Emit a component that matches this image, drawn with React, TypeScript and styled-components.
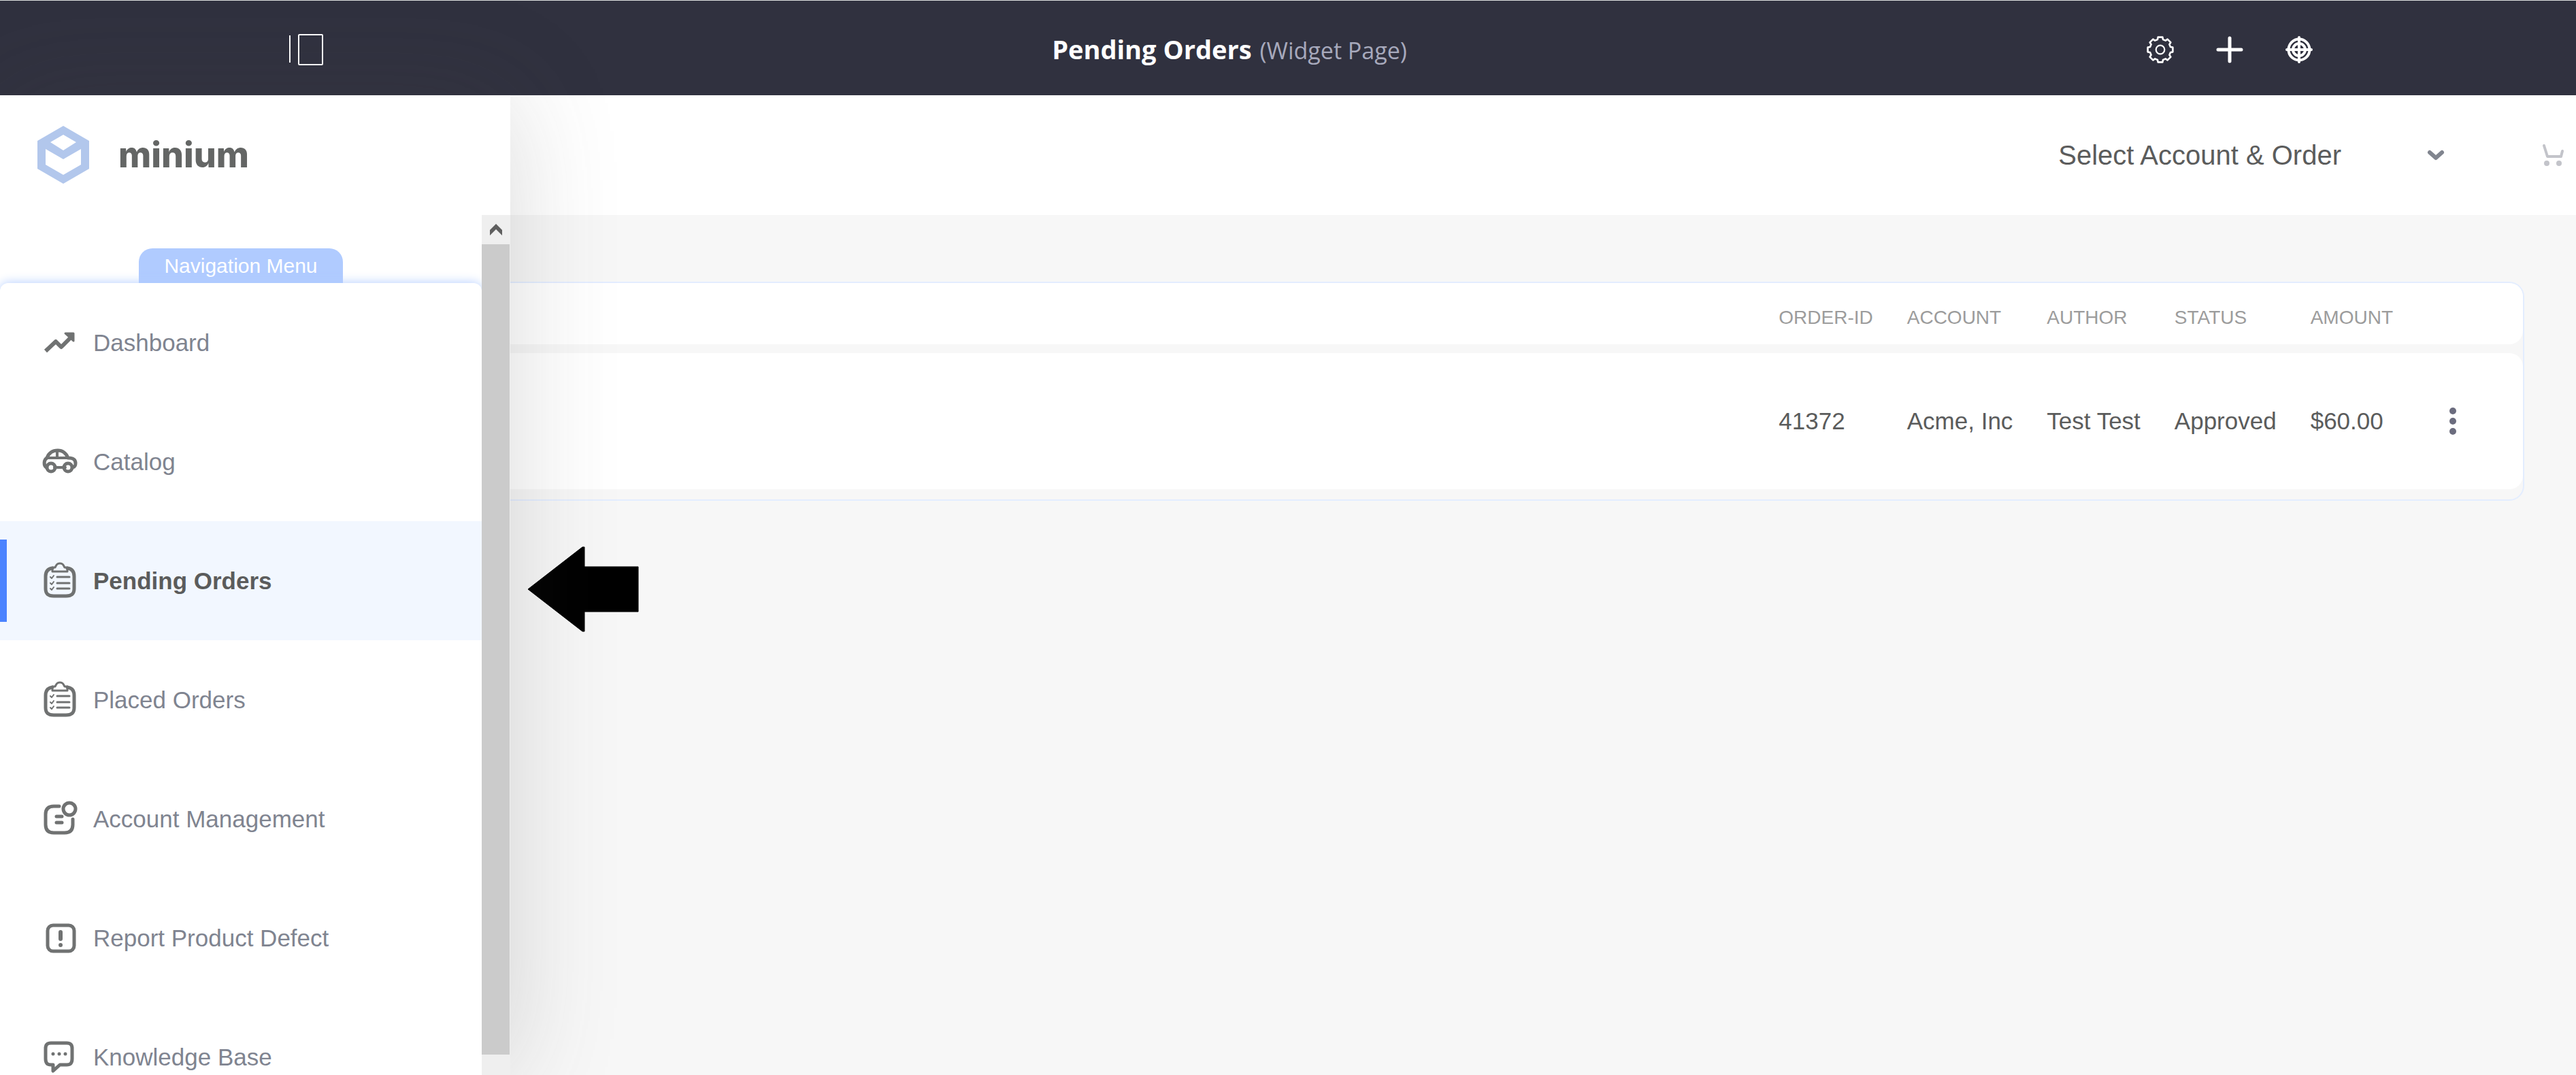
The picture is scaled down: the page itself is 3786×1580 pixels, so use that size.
import React from "react";
import styled, { createGlobalStyle } from "styled-components";

const GlobalStyle = createGlobalStyle`
  *, *::before, *::after { box-sizing: border-box; }
  body {
    margin: 0;
    background: #f7f7f7;
    color: #5b5c5c;
    font-family: "Liberation Sans", Arial, sans-serif;
    font-size: 35px;
  }
  button {
    font: inherit;
    color: inherit;
    background: none;
    border: 0;
    padding: 0;
    cursor: pointer;
  }
`;

const Shell = styled.div`
  display: flex;
  flex-direction: column;
  height: 100vh;
  overflow: hidden;
`;

const TopBar = styled.header`
  display: flex;
  align-items: center;
  justify-content: space-between;
  flex: none;
  height: 140px;
  padding: 4px 387px 0 424px;
  background: #30313f;
  border-top: 1px solid #dfe2e2;
  color: #fff;
`;

const IconButton = styled.button`
  display: flex;
  align-items: center;
  justify-content: center;
`;

const PageTitle = styled.h1`
  display: flex;
  align-items: baseline;
  gap: 12px;
  margin: 0;
  font-family: "Open Sans", "Noto Sans", sans-serif;
  font-size: 38px;
  font-weight: 700;
  line-height: 56px;
`;

const PageType = styled.span`
  color: #a7a9bc;
  font-size: 34px;
  font-weight: 400;
`;

const Tools = styled.div`
  display: flex;
  gap: 62px;
  padding-left: 16px;
`;

const Body = styled.div`
  display: grid;
  grid-template-columns: 750px minmax(0, 1fr);
  flex: 1;
  min-height: 0;
`;

const Sidebar = styled.aside`
  position: relative;
  z-index: 1;
  display: flex;
  flex-direction: column;
  min-height: 0;
  background: #fff;
  box-shadow: 0 0 150px rgba(68, 68, 72, 0.2);
`;

const Brand = styled.a`
  display: flex;
  align-items: center;
  flex: none;
  gap: 42px;
  height: 176px;
  padding: 0 0 1px 55px;
  color: #646665;
  font-family: Inter, sans-serif;
  font-size: 52px;
  font-weight: 800;
  line-height: 64px;
  text-decoration: none;
`;

const SidebarScroll = styled.div`
  display: flex;
  flex: 1;
  min-height: 0;
`;

const NavArea = styled.nav`
  display: flex;
  flex-direction: column;
  align-items: center;
  flex: 1;
  min-width: 0;
  overflow: hidden;
  padding-top: 49px;
`;

const NavLabel = styled.div`
  flex: none;
  padding: 0 37px;
  border-radius: 20px 20px 0 0;
  background: #b0cbff;
  color: #fff;
  font-size: 30px;
  line-height: 51px;
`;

const NavList = styled.ul`
  flex: none;
  width: 100%;
  margin: 0;
  padding: 0;
  list-style: none;
  background: #fff;
  border-radius: 12px;
  box-shadow: 0 0 16px #b0cbff;
`;

const NavLink = styled.a<{ $active?: boolean }>`
  position: relative;
  display: flex;
  align-items: center;
  gap: 21px;
  height: 175px;
  padding: 1px 0 0 60px;
  background: ${(p) => (p.$active ? "#f2f7ff" : "transparent")};
  color: ${(p) => (p.$active ? "#5b5c5c" : "#7f8490")};
  font-weight: ${(p) => (p.$active ? 700 : 400)};
  text-decoration: none;

  &::before {
    content: "";
    display: ${(p) => (p.$active ? "block" : "none")};
    position: absolute;
    left: 0;
    top: 27px;
    bottom: 27px;
    width: 10px;
    background: #4b83ff;
  }
`;

const ScrollTrack = styled.div`
  display: flex;
  flex-direction: column;
  flex: none;
  width: 42px;
  padding: 0 1px 30px 0;
  background: #efefef;
`;

const ScrollUp = styled(IconButton)`
  height: 43px;
  color: #5f5f5f;
`;

const ScrollThumb = styled.div`
  flex: 1;
  background: #cbcbcb;
`;

const Main = styled.main`
  position: relative;
  display: flex;
  flex-direction: column;
`;

const AccountBar = styled.div`
  display: flex;
  align-items: center;
  justify-content: flex-end;
  gap: 138px;
  height: 176px;
  padding-right: 14px;
  background: #fff;
`;

const AccountButton = styled.button`
  display: flex;
  align-items: center;
  gap: 125px;
  font-size: 40px;
  line-height: 48px;
`;

const CartButton = styled(IconButton)`
  width: 40px;
  color: #c3c4ca;
`;

const OrdersCard = styled.section`
  margin: 98px 76px 0 0;
  padding-bottom: 2px;
  border: 2px solid #e3edff;
  border-left: 0;
  border-radius: 0 22px 22px 0;
`;

const OrdersTable = styled.table`
  width: 100%;
  margin-top: -13px;
  border-collapse: separate;
  border-spacing: 0 13px;
  white-space: nowrap;
  text-align: left;
`;

const HeadCell = styled.th`
  height: 90px;
  padding: 12px 25px 0;
  background: #fff;
  color: #9c9c9c;
  font-size: 28px;
  font-weight: 400;
  &:last-child { border-radius: 0 20px 20px 0; }
`;

const Cell = styled.td`
  height: 200px;
  padding: 0 25px;
  background: #fff;
  &:last-child { border-radius: 0 20px 20px 0; }
`;

const FillColumn = styled.col`
  width: 100%;
`;

const MenuButton = styled(IconButton)`
  width: 40px;
  height: 60px;
  margin: 0 58px 0 18px;
  color: #6b6c7e;
`;

const Pointer = styled.svg`
  position: absolute;
  left: 25px;
  top: 663px;
`;

const NavIcon = styled.svg`
  flex: none;
  width: 56px;
  height: 56px;
  fill: none;
  stroke: #707272;
  stroke-width: 5;
  stroke-linecap: round;
  stroke-linejoin: round;
`;

const TrendIcon = () => (
  <NavIcon viewBox="0 0 56 56" aria-hidden="true">
    <path d="M7 40 L22 26 L30 34 L44 20" strokeLinecap="butt" strokeWidth="6" />
    <path d="M36 14 H48 V25 Z" fill="#707272" strokeWidth="3" />
  </NavIcon>
);

const CarIcon = () => (
  <NavIcon viewBox="0 0 56 56" aria-hidden="true">
    <g strokeWidth="5">
      <path d="M8 36 C4 33 4 25 9 22 C12 14 18 11 25 11 C32 11 37 15 40 22 C47 22 51 24 51 30 C51 34 50 35 47 36" />
      <path d="M9 22 H42 M24 11 V22 M20 36 H36" strokeWidth="4" />
      <circle cx="15" cy="36" r="6" />
      <circle cx="40" cy="36" r="6" />
    </g>
  </NavIcon>
);

const ClipboardIcon = () => (
  <NavIcon viewBox="0 0 56 56" aria-hidden="true">
    <path d="M17 9 C10 10 7 14 7 21 V39 C7 47 11 50 19 50 H37 C45 50 49 47 49 39 V21 C49 14 46 10 39 9" />
    <path d="M17 14 V8 H21 C23 4 24 2 28 2 C32 2 33 4 35 8 H39 V14 Z" strokeWidth="3" />
    <path d="M24 22 H42 M24 31 H42 M24 39 H42" strokeWidth="3" />
    <path d="M14 22 L16 24 L19 20 M14 31 L16 33 L19 29 M14 39 L16 41 L19 37" strokeWidth="2" />
  </NavIcon>
);

const AccountIcon = () => (
  <NavIcon viewBox="0 0 56 56" aria-hidden="true">
    <path d="M27 9 H19 C11 9 7 13 7 21 V36 C7 44 11 48 19 48 H35 C43 48 47 44 47 36 V28" />
    <circle cx="42" cy="13" r="9" />
    <path d="M23 24 H31 M23 33 H31" />
  </NavIcon>
);

const AlertIcon = () => (
  <NavIcon viewBox="0 0 56 56" aria-hidden="true">
    <rect x="10" y="9" width="39" height="38" rx="8" />
    <path d="M29 19 V29 M29 38 V38" strokeWidth="6" />
  </NavIcon>
);

const ChatIcon = () => (
  <NavIcon viewBox="0 0 56 56" aria-hidden="true">
    <path d="M15 7 H38 C44 7 46 10 46 15 V30 C46 36 44 39 38 39 H28 L18 48 V39 H15 C9 39 7 36 7 30 V15 C7 10 9 7 15 7 Z" />
    <path d="M18 23 H18 M27 23 H27 M36 23 H36" />
  </NavIcon>
);

const navItems = [
  { label: "Dashboard", Icon: TrendIcon },
  { label: "Catalog", Icon: CarIcon },
  { label: "Pending Orders", Icon: ClipboardIcon, active: true },
  { label: "Placed Orders", Icon: ClipboardIcon },
  { label: "Account Management", Icon: AccountIcon },
  { label: "Report Product Defect", Icon: AlertIcon },
  { label: "Knowledge Base", Icon: ChatIcon },
];

const columns = ["Order-ID", "Account", "Author", "Status", "Amount"];

const orders = [
  { id: "41372", account: "Acme, Inc", author: "Test Test", status: "Approved", amount: "$60.00" },
];

const gearPath = (() => {
  const points: string[] = [];
  for (let i = 0; i < 8; i++) {
    const mid = (i * Math.PI) / 4;
    [[-0.26, 15.5], [-0.18, 18.7], [0.18, 18.7], [0.26, 15.5]].forEach(([offset, radius]) => {
      const x = 20 + radius * Math.sin(mid + offset);
      const y = 20 - radius * Math.cos(mid + offset);
      points.push(`${x.toFixed(2)} ${y.toFixed(2)}`);
    });
  }
  return `M${points.join(" L")} Z`;
})();

export default function App() {
  return (
    <Shell>
      <GlobalStyle />
      <TopBar>
        <IconButton aria-label="Toggle panel">
          <svg width="51" height="46" viewBox="0 0 51 46" fill="none" stroke="#fff" strokeWidth="2">
            <path d="M2 2 V42" />
            <rect x="15" y="1" width="35" height="44" rx="1" />
          </svg>
        </IconButton>
        <PageTitle>
          Pending Orders <PageType>(Widget Page)</PageType>
        </PageTitle>
        <Tools>
          <IconButton aria-label="Configure page">
            <svg width="40" height="40" viewBox="0 0 40 40" fill="none" stroke="#fff" strokeWidth="2.6" strokeLinejoin="round">
              <path d={gearPath} />
              <circle cx="20" cy="20" r="6.3" strokeWidth="2.2" />
            </svg>
          </IconButton>
          <IconButton aria-label="Add">
            <svg width="40" height="40" viewBox="0 0 40 40" stroke="#fff" strokeWidth="5" strokeLinecap="round">
              <path d="M20 3 V37 M3 20 H37" />
            </svg>
          </IconButton>
          <IconButton aria-label="Experience">
            <svg width="40" height="40" viewBox="0 0 40 40" fill="none" stroke="#fff" strokeWidth="4" strokeLinecap="round">
              <circle cx="20" cy="20" r="15.5" />
              <circle cx="20" cy="20" r="9" />
              <path d="M20 2 V38 M2 20 H38" />
            </svg>
          </IconButton>
        </Tools>
      </TopBar>
      <Body>
        <Sidebar>
          <Brand href="#">
            <svg width="77" height="86" viewBox="0 0 77 86" aria-hidden="true">
              <path
                fill="#b2c7ec"
                fillRule="evenodd"
                d="M38 0 L76 22 V63 L38 85 L0 63 V22 Z M38 13 L19 24 L38 36 L57 24 Z M12 34 V57 L38 72 L64 57 V34 L38 49 Z"
              />
            </svg>
            minium
          </Brand>
          <SidebarScroll>
            <NavArea>
              <NavLabel>Navigation Menu</NavLabel>
              <NavList>
                {navItems.map(({ label, Icon, active }) => (
                  <li key={label}>
                    <NavLink href="#" $active={active} aria-current={active ? "page" : undefined}>
                      <Icon />
                      {label}
                    </NavLink>
                  </li>
                ))}
              </NavList>
            </NavArea>
            <ScrollTrack>
              <ScrollUp aria-label="Scroll up">
                <svg width="20" height="18" viewBox="0 0 20 18" fill="currentColor">
                  <path d="M10 0 L19 9 V17 L10 8 L1 17 V9 Z" />
                </svg>
              </ScrollUp>
              <ScrollThumb />
            </ScrollTrack>
          </SidebarScroll>
        </Sidebar>
        <Main>
          <AccountBar>
            <AccountButton>
              Select Account &amp; Order
              <svg width="28" height="20" viewBox="0 0 28 20" fill="none" stroke="#81858f" strokeWidth="6" strokeLinecap="round" strokeLinejoin="round">
                <path d="M5 6 L14 14 L23 6" />
              </svg>
            </AccountButton>
            <CartButton aria-label="Cart">
              <svg width="34" height="34" viewBox="0 0 34 34" fill="none" stroke="currentColor" strokeWidth="4" strokeLinecap="round" strokeLinejoin="round">
                <path d="M4 3 L9 19 H29 L31 11" />
                <circle cx="8" cy="29" r="4" fill="currentColor" stroke="none" />
                <circle cx="26" cy="29" r="4" fill="currentColor" stroke="none" />
              </svg>
            </CartButton>
          </AccountBar>
          <OrdersCard>
            <OrdersTable>
              <colgroup>
                <FillColumn />
              </colgroup>
              <thead>
                <tr>
                  <HeadCell aria-hidden="true" />
                  {columns.map((name) => (
                    <HeadCell key={name} scope="col">
                      {name.toUpperCase()}
                    </HeadCell>
                  ))}
                  <HeadCell aria-hidden="true" />
                </tr>
              </thead>
              <tbody>
                {orders.map((order) => (
                  <tr key={order.id}>
                    <Cell />
                    <Cell>{order.id}</Cell>
                    <Cell>{order.account}</Cell>
                    <Cell>{order.author}</Cell>
                    <Cell>{order.status}</Cell>
                    <Cell>{order.amount}</Cell>
                    <Cell>
                      <MenuButton aria-label="Order actions">
                        <svg width="12" height="42" viewBox="0 0 12 42" fill="currentColor">
                          <circle cx="6" cy="6" r="5" />
                          <circle cx="6" cy="21" r="5" />
                          <circle cx="6" cy="36" r="5" />
                        </svg>
                      </MenuButton>
                    </Cell>
                  </tr>
                ))}
              </tbody>
            </OrdersTable>
          </OrdersCard>
          <Pointer width="164" height="126" viewBox="0 0 164 126" aria-hidden="true">
            <path d="M1 63 L81 1 H84 V30 H163 V96 H84 V125 H81 Z" stroke="#000" strokeLinejoin="round" />
          </Pointer>
        </Main>
      </Body>
    </Shell>
  );
}
